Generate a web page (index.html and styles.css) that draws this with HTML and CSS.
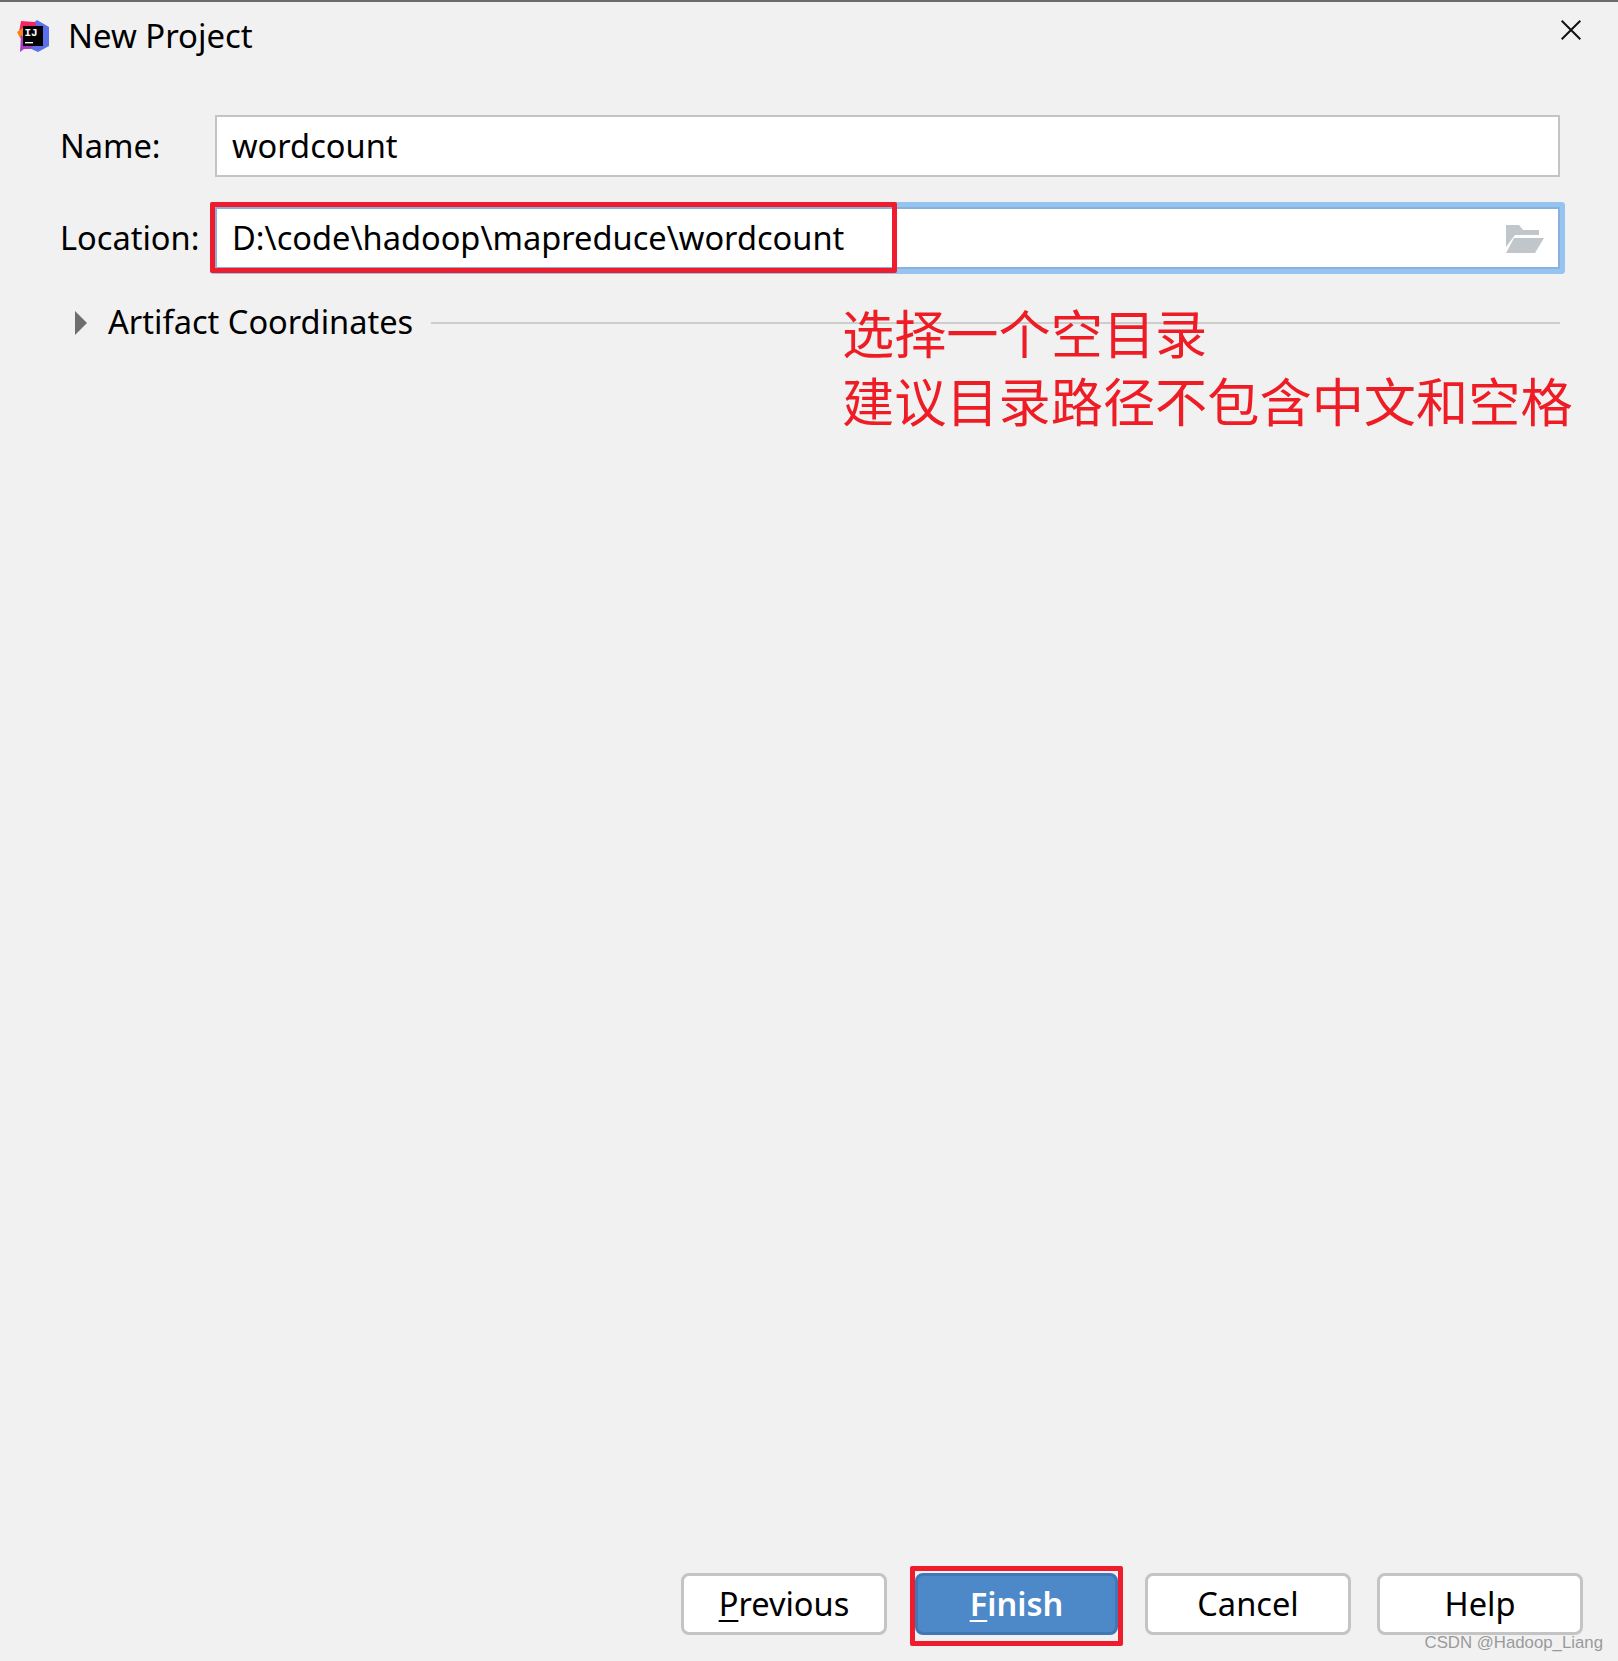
FILE: index.html
```html
<!DOCTYPE html>
<html lang="zh">
<head>
<meta charset="utf-8">
<title>New Project</title>
<link rel="stylesheet" href="styles.css">
</head>
<body>
<div class="dialog">
  <header class="titlebar">
    <svg class="logo" viewBox="0 0 32 32" aria-hidden="true">
      <path fill="#5b6fe8" d="M20 0 32 7 32 26 21 32 12 28 14 5Z"/>
      <path fill="#f0285f" d="M4 1 18 2 21 10 9 18 2 12Z"/>
      <path fill="#fc801d" d="M0 12 6 8 8 19 3 18Z"/>
      <path fill="#a83cc4" d="M4 15 17 26 13 29 7 29 3 32Z"/>
      <rect x="6" y="6" width="20" height="20" fill="#000"/>
      <text x="7.4" y="16" class="logo-text">IJ</text>
      <rect x="8" y="22" width="8" height="1.4" fill="#fff"/>
    </svg>
    <span class="title">New Project</span>
    <svg class="close" viewBox="0 0 20 20" aria-hidden="true"><path d="M.7.7 19.3 19.3M19.3.7.7 19.3"/></svg>
  </header>

  <main class="form">
    <div class="row">
      <label class="label">Name:</label>
      <div class="field">wordcount</div>
    </div>
    <div class="row row-location">
      <label class="label">Location:</label>
      <div class="field field-focus">
        <span>D:\code\hadoop\mapreduce\wordcount</span>
        <svg class="folder" viewBox="0 0 38 28" aria-hidden="true">
          <path fill="#c0c6c9" d="M0 0H13L17 5H33V10H9L0 22Z"/>
          <path fill="#c0c6c9" d="M8 13H38L29 28H0Z"/>
        </svg>
      </div>
    </div>
    <div class="artifact">
      <span class="triangle"></span>
      <span class="artifact-text">Artifact Coordinates</span>
      <span class="rule"></span>
    </div>
  </main>

  <footer class="buttons">
    <button class="btn"><u>P</u>revious</button>
    <button class="btn btn-primary"><u>F</u>inish</button>
    <button class="btn">Cancel</button>
    <button class="btn">Help</button>
  </footer>

  <div class="mark mark-location"></div>
  <div class="mark mark-finish"></div>
  <div class="note">选择一个空目录<br>建议目录路径不包含中文和空格</div>
  <div class="watermark">CSDN @Hadoop_Liang</div>
</div>
</body>
</html>
```

FILE: styles.css
```css
* { box-sizing: border-box; }
html, body { margin: 0; padding: 0; }
body {
  width: 1618px;
  height: 1661px;
  background: #f1f1f1;
  font-family: "Noto Sans", "Open Sans", sans-serif;
  font-size: 32.6px;
  color: #000;
  overflow: hidden;
}
.dialog {
  position: relative;
  display: flex;
  flex-direction: column;
  height: 1661px;
  border-top: 2px solid #6b6b6b;
}
.titlebar {
  display: flex;
  align-items: center;
  height: 68px;
  padding: 0 37px 0 17px;
}
.logo { width: 32px; height: 32px; flex: none; }
.logo-text { font-family: "Liberation Mono", monospace; font-weight: 700; font-size: 11px; fill: #fff; }
.title { margin-left: 19px; line-height: 68px; font-size: 32.9px; }
.close {
  width: 20px;
  height: 20px;
  margin: -12px 0 0 auto;
  stroke: #111;
  stroke-width: 2;
  fill: none;
}
.form {
  flex: 1;
  display: flex;
  flex-direction: column;
  padding: 45px 58px 0 60px;
}
.row { display: flex; align-items: center; height: 62px; }
.row-location { margin-top: 30px; }
.label { width: 155px; flex: none; padding-bottom: 2px; }
.field {
  flex: 1;
  height: 62px;
  display: flex;
  align-items: center;
  padding: 0 15px 2px;
  background: #fff;
  border: 2px solid #c4c4c4;
}
.field-focus {
  justify-content: space-between;
  border-color: #8ab0dd;
  box-shadow: 0 0 0 5px #97c3f0;
  border-radius: 1px;
}
.folder { width: 38px; height: 28px; flex: none; margin: 4px -1px 0 0; }
.artifact {
  display: flex;
  align-items: center;
  height: 44px;
  margin-top: 32px;
  padding-left: 15px;
}
.triangle {
  width: 0;
  height: 0;
  border-style: solid;
  border-width: 12px 0 12px 12px;
  border-color: transparent transparent transparent #6e6e6e;
  flex: none;
}
.artifact-text { margin-left: 21px; margin-top: -4px; }
.rule { flex: 1; height: 2px; background: #cdcdcd; margin-left: 18px; }
.buttons {
  display: flex;
  justify-content: flex-end;
  gap: 26px;
  padding: 0 35px 26px 0;
}
.btn {
  width: 206px;
  height: 62px;
  padding: 0 0 2px;
  font: inherit;
  color: #000;
  background: #fff;
  border: 3px solid #c4c4c4;
  border-radius: 8px;
}
.btn u { text-underline-offset: 4px; text-decoration-thickness: 2px; }
.btn-primary {
  width: 203px;
  margin: 0 1px 0 2px;
  color: #fff;
  font-weight: 600;
  background: #4d88c8;
  border-color: #3f78b5;
}
.mark {
  position: absolute;
  border: 5px solid #ee1c2c;
  border-radius: 2px;
}
.mark-location { left: 210px; top: 200px; width: 687px; height: 71px; }
.mark-finish { left: 910px; top: 1564px; width: 213px; height: 80px; }
.note {
  position: absolute;
  left: 842px;
  top: 295px;
  font-family: "Noto Sans CJK SC", sans-serif;
  font-size: 52.2px;
  line-height: 68px;
  color: #ee1c25;
}
.watermark {
  position: absolute;
  right: 15px;
  bottom: 8px;
  font-family: "Liberation Sans", sans-serif;
  font-size: 16.8px;
  color: #9a9a9a;
}
```
